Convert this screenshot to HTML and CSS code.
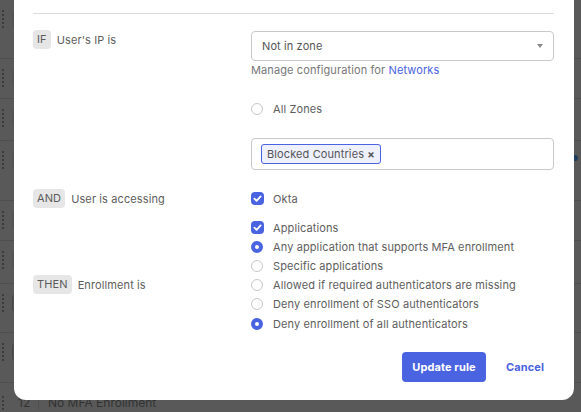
FILE: index.html
```html
<!DOCTYPE html>
<html>
<head>
<meta charset="utf-8">
<link rel="stylesheet" href="styles.css">
</head>
<body>
<div class="page">
  <div class="bg-row r1"><span class="handle"></span><span class="box"></span></div>
  <div class="bg-row r2"><span class="handle"></span><span class="box"></span></div>
  <div class="bg-row r3"><span class="handle"></span><span class="box"></span></div>
  <div class="bg-row r4"><span class="handle"></span><span class="box"></span><span class="dot"></span></div>
  <div class="bg-row r5"><span class="handle"></span><span class="box"></span></div>
  <div class="bg-row r6"><span class="handle"></span><span class="box"></span></div>
  <div class="bg-row r7"><span class="handle"></span><span class="box outline"></span></div>
  <div class="bg-row r8"><span class="handle"></span><span class="box outline"></span></div>
  <div class="bg-row r9"><span class="handle"></span><span class="num">12</span><span class="name">No MFA Enrollment</span></div>
</div>

<div class="modal">
  <div class="divider"></div>
  <div class="form">
    <div class="cond"><span class="pill">IF</span><span class="cond-label">User's IP is</span></div>
    <div class="controls">
      <div class="select"><span>Not in zone</span><span class="caret"></span></div>
      <div class="helper">Manage configuration for <span class="link">Networks</span></div>
      <div class="option gap-zones"><span class="radio"></span><span>All Zones</span></div>
      <div class="multi"><span class="tag">Blocked Countries <span class="tag-x">×</span></span></div>
    </div>

    <div class="cond row-and"><span class="pill">AND</span><span class="cond-label">User is accessing</span></div>
    <div class="controls row-and">
      <div class="option"><span class="check"><svg viewBox="0 0 13 13" width="13" height="13"><path d="M3.4 6.7 L5.6 8.8 L9.6 4.4" fill="none" stroke="#fff" stroke-width="1.8" stroke-linecap="round" stroke-linejoin="round"/></svg></span><span>Okta</span></div>
      <div class="option gap-apps"><span class="check"><svg viewBox="0 0 13 13" width="13" height="13"><path d="M3.4 6.7 L5.6 8.8 L9.6 4.4" fill="none" stroke="#fff" stroke-width="1.8" stroke-linecap="round" stroke-linejoin="round"/></svg></span><span>Applications</span></div>
      <div class="option"><span class="radio on"></span><span>Any application that supports MFA enrollment</span></div>
      <div class="option"><span class="radio"></span><span>Specific applications</span></div>
    </div>

    <div class="cond"><span class="pill">THEN</span><span class="cond-label">Enrollment is</span></div>
    <div class="controls">
      <div class="option"><span class="radio"></span><span>Allowed if required authenticators are missing</span></div>
      <div class="option"><span class="radio"></span><span>Deny enrollment of SSO authenticators</span></div>
      <div class="option last"><span class="radio on"></span><span>Deny enrollment of all authenticators</span></div>
    </div>
  </div>
  <div class="footer">
    <button class="btn-primary">Update rule</button>
    <button class="btn-link">Cancel</button>
  </div>
</div>
</body>
</html>
```
FILE: styles.css
```css
html, body {
  margin: 0;
  padding: 0;
}
body {
  width: 581px;
  height: 412px;
  overflow: hidden;
  background: #595959;
  font-family: Inter, "Noto Sans", sans-serif;
  position: relative;
}
.page {
  display: flex;
  flex-direction: column;
}
.bg-row {
  display: flex;
  align-items: flex-start;
  padding-top: 10px;
  box-sizing: border-box;
  border-bottom: 1px solid #4f4f4f;
  position: relative;
}
.r1 { height: 59px; }
.r2 { height: 40px; }
.r3 { height: 42px; }
.r4 { height: 60px; }
.r5 { height: 40px; }
.r6 { height: 43px; }
.r7 { height: 49px; }
.r8 { height: 50px; }
.r9 { height: 40px; border-bottom: none; padding-top: 13px; }
.handle {
  width: 0;
  height: 18px;
  margin-left: 2px;
  border-left: 2px dotted #3c3c3c;
}
.box {
  width: 20px;
  height: 18px;
  margin-left: 8px;
  border-radius: 4px;
  background: #545454;
}
.box.outline {
  border: 1px solid #474747;
  box-sizing: border-box;
}
.dot {
  position: absolute;
  right: 3px;
  top: 14px;
  width: 6px;
  height: 6px;
  border-radius: 50%;
  background: #1f3d5c;
}
.num {
  width: 20px;
  margin-left: 14px;
  font-size: 12px;
  line-height: 14px;
  color: #333;
}
.name {
  padding-left: 9px;
  border-left: 1px solid #4f4f4f;
  font-size: 12px;
  line-height: 14px;
  color: #333;
}

.modal {
  position: absolute;
  left: 14px;
  top: -20px;
  width: 560px;
  height: 420px;
  box-sizing: border-box;
  background: #fff;
  border-radius: 12px;
  padding: 33px 20px 0 19px;
  color: #5e5e5e;
  font-size: 11px;
  letter-spacing: 0.11px;
}
.divider {
  height: 1px;
  background: #dcdcdc;
}
.form {
  display: grid;
  grid-template-columns: 218px 303px;
  margin-top: 16px;
}
.cond {
  display: flex;
  align-items: center;
  gap: 6px;
  height: 19px;
}
.pill {
  height: 19px;
  line-height: 19px;
  padding: 0 4px;
  border-radius: 4px;
  background: #e6e6e6;
  color: #5b5b5b;
}
.row-and {
  margin-top: 19px;
}
.controls {
  display: flex;
  flex-direction: column;
}
.select {
  margin-top: 1px;
  height: 30px;
  box-sizing: border-box;
  border: 1px solid #c9c9c9;
  border-radius: 4px;
  display: flex;
  align-items: center;
  justify-content: space-between;
  padding: 0 10px;
  color: #555;
}
.caret {
  width: 0;
  height: 0;
  border-left: 3px solid transparent;
  border-right: 3px solid transparent;
  border-top: 4px solid #8a8a8a;
}
.helper {
  margin-top: 2px;
  line-height: 15px;
  color: #777;
}
.link {
  color: #4a63e1;
}
.option {
  display: flex;
  align-items: center;
  gap: 10px;
  height: 19px;
}
.option.last {
  margin-top: 1px;
}
.gap-zones {
  margin-top: 21px;
}
.gap-apps {
  margin-top: 10px;
}
.radio {
  width: 12px;
  height: 12px;
  box-sizing: border-box;
  border-radius: 50%;
  border: 1px solid #c8c8c8;
  background: #fff;
  flex: none;
}
.radio.on {
  border: 4px solid #4a63e1;
}
.check {
  width: 13px;
  height: 13px;
  border-radius: 4px;
  background: #4a63e1;
  display: flex;
  flex: none;
  margin-right: -1px;
}
.multi {
  margin-top: 20px;
  height: 32px;
  box-sizing: border-box;
  border: 1px solid #c9c9c9;
  border-radius: 4px;
  padding: 5px 9px;
  display: flex;
  align-items: flex-start;
}
.tag {
  height: 20px;
  box-sizing: border-box;
  border: 1px solid #4a63e1;
  border-radius: 3px;
  background: #eef0fc;
  padding: 0 5px 0 5px;
  display: flex;
  align-items: center;
  color: #555;
  white-space: pre;
}
.tag-x {
  font-weight: 700;
  font-size: 11px;
  margin-left: 0;
}
.footer {
  display: flex;
  justify-content: flex-end;
  align-items: center;
  margin-top: 19px;
  gap: 10px;
}
.btn-primary {
  width: 84px;
  height: 30px;
  border: none;
  border-radius: 4px;
  background: #4a63e1;
  color: #fff;
  font-family: Inter, "Noto Sans", sans-serif;
  font-size: 11px;
  font-weight: 700;
  letter-spacing: 0.11px;
  padding: 0;
}
.btn-link {
  height: 30px;
  border: none;
  background: none;
  color: #4a63e1;
  font-family: Inter, "Noto Sans", sans-serif;
  font-size: 11px;
  font-weight: 700;
  letter-spacing: 0.11px;
  padding: 0 10px;
}
```
